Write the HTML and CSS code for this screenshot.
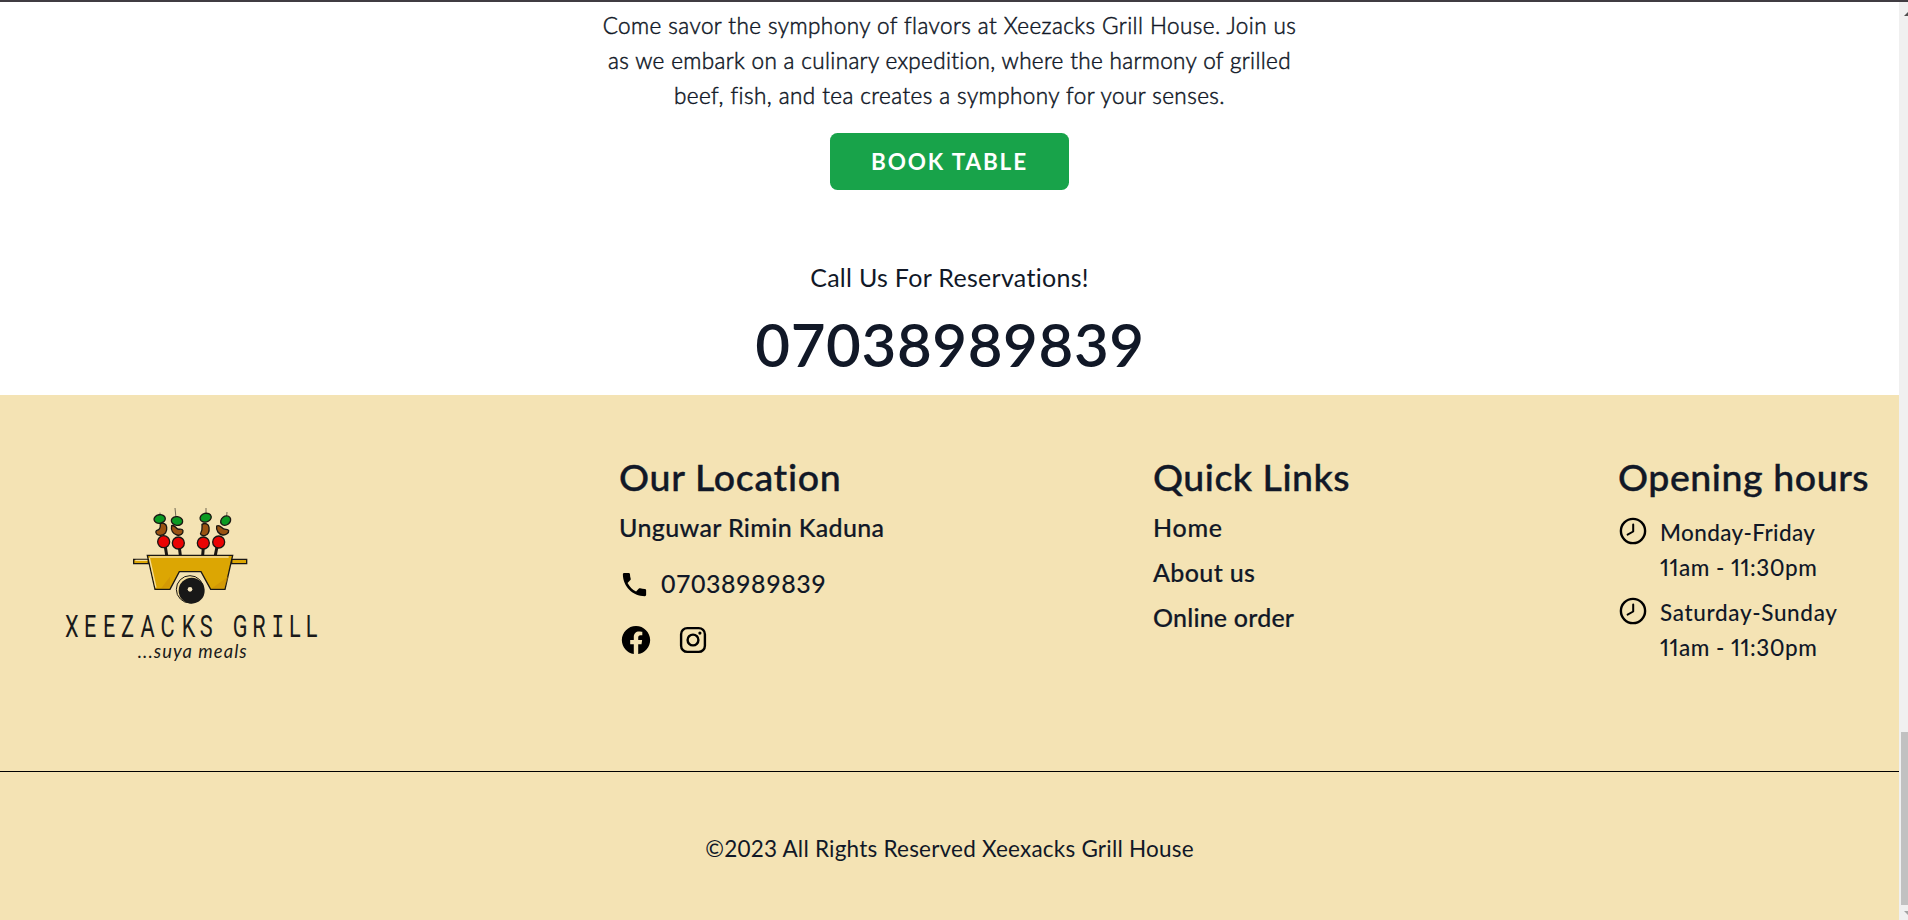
FILE: index.html
```html
<!DOCTYPE html>
<html lang="en">
<head>
<meta charset="utf-8">
<title>Xeezacks Grill House</title>
<link rel="stylesheet" href="styles.css">
</head>
<body>
<div class="window">
  <div class="page">
    <section class="booking">
      <p class="intro"><span class="l1">Come savor the symphony of flavors at Xeezacks Grill House. Join us</span><br><span class="l2">as we embark on a culinary expedition, where the harmony of grilled</span><br><span class="l3">beef, fish, and tea creates a symphony for your senses.</span></p>
      <button class="book">BOOK TABLE</button>
      <p class="call">Call Us For Reservations!</p>
      <p class="big-phone">07038989839</p>
    </section>
    <footer class="footer">
      <div class="columns">
        <div class="logo">
          <svg width="300" height="190" viewBox="0 0 900 570" stroke-linejoin="round">
            <g stroke="#1a1713" stroke-width="9" fill="none">
              <path d="M376 170l4 26M418 172l3 24M490 172l-2 24M531 170l-5 26"/>
              <path stroke-width="3" d="M405 54l3 30M360 68v8M498 54v16M561 66l-1 12" opacity=".6"/>
            </g>
            <g stroke="#1a1713" stroke-width="4">
              <g fill="#9a5212">
                <path d="M361 101c8-4 18 0 19 10 2 14-5 24-18 25-11 1-18-8-13-14 8-2 13-5 12-21z"/>
                <path d="M395 107c-3 14 4 25 16 28 11 3 19-4 18-13-2-7-9-3-16-5-7-4-9-13-18-10z"/>
                <path d="M486 103c9-5 20-2 21 9 2 13-3 24-13 25-10 1-15-5-11-10 5-7 3-14 3-24z"/>
                <path d="M530 108c-3 14 7 25 18 27 10 1 19-6 18-13-3-6-10-2-16-6-7-5-12-13-20-8z"/>
              </g>
              <g fill="#0b9a22">
                <ellipse cx="359" cy="87" rx="17" ry="13" transform="rotate(-10 359 87)"/>
                <ellipse cx="411" cy="93" rx="17" ry="13" transform="rotate(8 411 93)"/>
                <ellipse cx="497" cy="83" rx="17" ry="13" transform="rotate(-14 497 83)"/>
                <ellipse cx="557" cy="92" rx="16" ry="13" transform="rotate(-38 557 92)"/>
              </g>
              <g fill="#ea0303">
                <circle cx="371" cy="155" r="18"/><circle cx="415" cy="159" r="18"/>
                <circle cx="490" cy="159" r="18"/><circle cx="536" cy="156" r="18"/>
              </g>
            </g>
            <g fill="#dca603" stroke="#1a1713" stroke-width="4" stroke-linejoin="miter">
              <path d="M281 208h44v13h-44zM575 208h45v13h-45z"/>
              <path d="M322 196h256l-23 102h-43l-29-53h-65l-28 53h-45z"/>
            </g>
            <path d="M286 211h36M330 201h236M328 203l20 90" fill="none" stroke="#f6df9e" stroke-width="4"/>
            <path d="M390 260v32l-26 2zM567 258l-14 36h-36z" fill="#c98c08" opacity=".5"/>
            <circle cx="450" cy="298" r="41" fill="#f6df9e" stroke="#1a1713" stroke-width="3"/>
            <circle cx="455" cy="302" r="39" fill="#181818"/>
            <circle cx="450" cy="298" r="7" fill="#f8e8c0"/>
            <text class="brand" y="442" transform="scale(.7 1)" x="107 189 270 347 431 516 607 685 780 826 910">XEEZACKS GR<tspan class="brand-i" x="992">I</tspan><tspan x="1067 1139">LL</tspan></text>
            <text class="tagline" x="293" y="504" textLength="327">...suya meals</text>
          </svg>
        </div>
        <div class="location">
          <h2 class="h-loc">Our Location</h2>
          <p class="item">Unguwar Rimin Kaduna</p>
          <div class="phone">
            <svg width="31" height="31" viewBox="0 0 24 24"><path d="M6.62 10.79c1.44 2.83 3.76 5.14 6.59 6.59l2.2-2.2c.27-.27.67-.36 1.02-.24 1.12.37 2.33.57 3.57.57.55 0 1 .45 1 1V20c0 .55-.45 1-1 1-9.39 0-17-7.61-17-17 0-.55.45-1 1-1h3.5c.55 0 1 .45 1 1 0 1.25.2 2.45.57 3.57.11.35.03.74-.25 1.02l-2.2 2.2z"/></svg>
            <span>07038989839</span>
          </div>
          <div class="social">
            <svg width="34" height="34" viewBox="0 0 24 24"><path d="M12 2.04C6.5 2.04 2 6.53 2 12.06C2 17.06 5.66 21.21 10.44 21.96V14.96H7.9V12.06H10.44V9.85C10.44 7.34 11.93 5.96 14.22 5.96C15.31 5.96 16.45 6.15 16.45 6.15V8.62H15.19C13.95 8.62 13.56 9.39 13.56 10.18V12.06H16.34L15.89 14.96H13.56V21.96C18.34 21.21 22 17.06 22 12.06 22 6.53 17.5 2.04 12 2.04Z"/></svg>
            <svg width="28" height="28" viewBox="0 0 28 28"><rect x="2.1" y="2.1" width="23.8" height="23.8" rx="6.2" fill="none" stroke="#000" stroke-width="2.4"/><circle cx="14" cy="14" r="5.4" fill="none" stroke="#000" stroke-width="2.4"/><circle cx="20.9" cy="7.1" r="1.6"/></svg>
          </div>
        </div>
        <div class="links">
          <h2 class="h-links">Quick Links</h2>
          <a class="item home">Home</a>
          <a class="item">About us</a>
          <a class="item order">Online order</a>
        </div>
        <div class="hours">
          <h2 class="h-hours">Opening hours</h2>
          <div class="slot">
            <svg width="28" height="28" viewBox="0 0 28 28" fill="none" stroke="#000" stroke-width="2.4"><circle cx="14" cy="14" r="12.1"/><path stroke-width="2" stroke-linecap="round" stroke-linejoin="round" d="M14.2 7.6v6.9l-5.6 3.1"/></svg>
            <p><span class="day">Monday-Friday</span><br><span class="time">11am - 11:30pm</span></p>
          </div>
          <div class="slot">
            <svg width="28" height="28" viewBox="0 0 28 28" fill="none" stroke="#000" stroke-width="2.4"><circle cx="14" cy="14" r="12.1"/><path stroke-width="2" stroke-linecap="round" stroke-linejoin="round" d="M14.2 7.6v6.9l-5.6 3.1"/></svg>
            <p><span class="day weekend">Saturday-Sunday</span><br><span class="time">11am - 11:30pm</span></p>
          </div>
        </div>
      </div>
      <p class="copyright">©2023 All Rights Reserved Xeexacks Grill House</p>
    </footer>
  </div>
  <div class="scrollbar">
    <svg class="arrow" width="4" height="4" viewBox="0 0 4 4"><path d="M0 4L4 0V4z" fill="#505050"/></svg>
    <div class="thumb"></div>
    <svg class="arrow" width="4" height="4" viewBox="0 0 4 4"><path d="M0 0L4 4V0z" fill="#a3a3a3"/></svg>
  </div>
</div>
</body>
</html>
```
FILE: styles.css
```css
* { box-sizing: border-box; }
body { margin: 0; font-family: Lato, "Noto Sans", sans-serif; color: #111827; background: #fff; }
p, h2 { margin: 0; }
svg { display: block; flex: none; }

.window { height: 920px; border-top: 2px solid #403c42; display: flex; overflow: hidden; }
.page { width: 1899px; display: flex; flex-direction: column; }

.booking { height: 393px; padding-top: 6px; display: flex; flex-direction: column; align-items: center; text-align: center; }
.intro { font-size: 22.5px; line-height: 35px; font-weight: 300; white-space: nowrap; -webkit-text-stroke: .5px #111827; }
.l1 { letter-spacing: .43px; }
.l2 { letter-spacing: .35px; }
.l3 { letter-spacing: .43px; }
.book { margin-top: 20px; width: 239px; height: 57px; padding: 0; border: 0; border-radius: 7.5px; background: #18a34a; color: #fff; font: 700 22.5px/35px Lato, sans-serif; letter-spacing: 1.85px; }
.call { margin-top: 70px; font-size: 25px; line-height: 35px; letter-spacing: .3px; }
.big-phone { margin-top: 19px; font-size: 60px; line-height: 60px; font-weight: 600; letter-spacing: .6px; padding-left: 1px; }

.footer { height: 525px; background: #f4e3b4; }
.columns { height: 376px; padding: 59px 0 0 40px; display: grid; grid-template-columns: 579px 534px 465px 1fr; }
.logo { padding-top: 36px; }
h2 { font-size: 37.5px; line-height: 45px; font-weight: 500; white-space: nowrap; -webkit-text-stroke: .4px #111827; }
.h-loc { letter-spacing: .7px; }
.h-links { letter-spacing: .5px; }
.h-hours { letter-spacing: .55px; }
.item { display: block; margin-top: 10px; font-size: 25px; line-height: 35px; font-weight: 500; letter-spacing: .35px; -webkit-text-stroke: .2px #111827; }
h2 + .item { margin-top: 11px; }
.home { letter-spacing: .7px; }
.order { letter-spacing: .2px; }
.phone { margin-top: 21px; display: flex; align-items: center; gap: 11px; font-size: 25px; line-height: 35px; font-weight: 500; letter-spacing: .52px; }
.phone svg { margin-top: 1px; }
.social { margin-top: 22px; display: flex; align-items: center; gap: 26px; }

.slot { margin-top: 10px; display: flex; gap: 13px; font-size: 22.5px; line-height: 35px; font-weight: 500; padding-left: 1px; }
.h-hours + .slot { margin-top: 16px; }
.slot svg { margin-top: 2px; }
.day { letter-spacing: .38px; }
.weekend { letter-spacing: .65px; }
.time { font-variant-numeric: proportional-nums; letter-spacing: .5px; }

.copyright { border-top: 1px solid #000; padding-top: 59px; text-align: center; font-size: 22.5px; line-height: 35px; letter-spacing: .22px; }

.brand { font: 400 93px Roboto, sans-serif; fill: #1a1a1a; }
.brand-i { font-family: "DejaVu Sans Mono", monospace; font-size: 90px; }
.tagline { font: italic 400 55px Lato, sans-serif; fill: #1a1a1a; }

.scrollbar { width: 9px; background: #f0f0f0; display: flex; flex-direction: column; align-items: flex-end; padding-top: 10px; }
.thumb { width: 7px; height: 173px; margin: 716px 0 6px; background: #c1c1c1; flex: none; }
```
